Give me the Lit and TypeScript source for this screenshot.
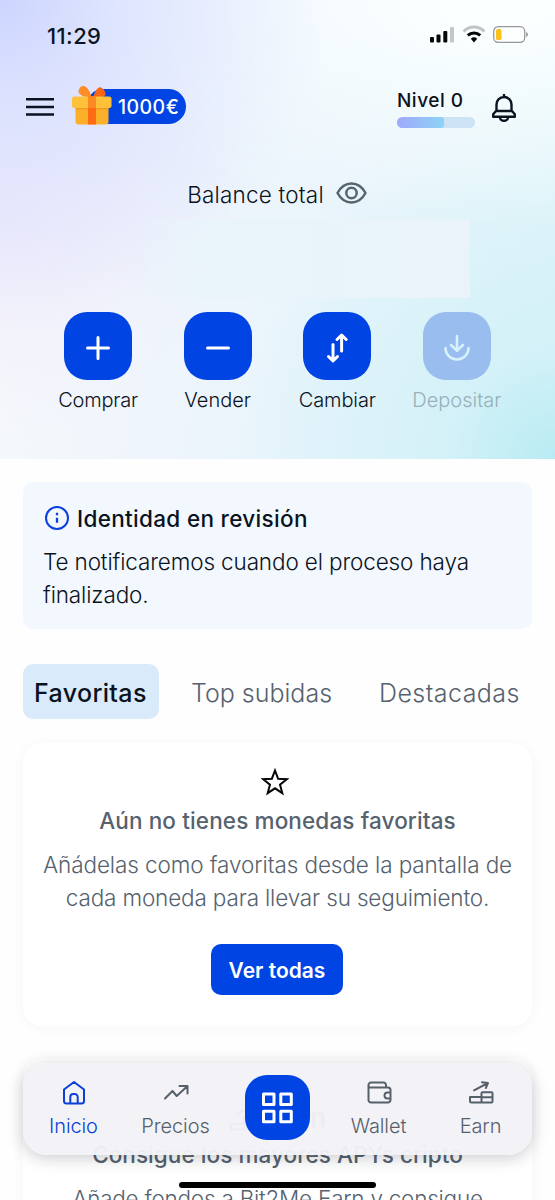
import { LitElement, html, css, svg } from "lit";
import { customElement } from "lit/decorators.js";

const actions = [
  { label: "Comprar", cls: "l-comprar", icon: svg`<path d="M34 25.500v21M23.500 36h21"/>`, off: false },
  { label: "Vender", cls: "l-vender", icon: svg`<path d="M23.500 36h21"/>`, off: false },
  { label: "Cambiar", cls: "l-cambiar", icon: svg`<path d="M30 32.500v15.500M25.500 44.500L30 49l4.500-4.500M38.600 39V23.500M34 27.500l4.600-4.500 4.600 4.500"/>`, off: false },
  { label: "Depositar", cls: "l-depositar", icon: svg`<path d="M34 24v14.500M28 33l6 5.700 6-5.700M22.500 36a11.500 11.500 0 0 0 23 0" stroke-width="2.600"/>`, off: true },
];

@customElement("app-root")
export class AppRoot extends LitElement {
  static styles = css`
    :host {
      display: block;
      position: relative;
      width: 555px;
      height: 1200px;
      overflow: hidden;
      background: #fefefe;
      color: #0b1220;
      font-family: Inter, "Noto Sans", sans-serif;
      font-weight: 300;
    }
    * { box-sizing: border-box; }
    svg { display: block; flex: none; fill: none; }
    p, h2, h3 { margin: 0; white-space: nowrap; }
    .hero {
      height: 459px;
      display: flex;
      flex-direction: column;
      background:
        radial-gradient(circle at 0 0, #ccd5ff 0, rgba(212, 220, 255, 0.7) 110px, rgba(235, 240, 255, 0) 330px),
        radial-gradient(ellipse 240px 230px at 0 210px, rgba(238, 232, 250, 0.75), rgba(240, 238, 251, 0)),
        radial-gradient(ellipse 460px 230px at 90% 0, #fbffff 10%, rgba(251, 255, 255, 0)),
        radial-gradient(circle at 100% 100%, #b9ebf3 0, rgba(204, 240, 247, 0.65) 110px, rgba(224, 244, 250, 0) 330px),
        linear-gradient(100deg, #f8fafb 0, #eff5fc 35%, #e7f4fb 65%, #dff4f9 100%);
    }
    .status { height: 70px; padding: 0 26px 0 47px; display: flex; align-items: center; }
    .time { flex: 1; padding-top: 1px; font-size: 22px; font-weight: 550; letter-spacing: 0.4px; }
    .signals { display: flex; align-items: center; }
    .top { height: 72px; padding: 0 37px 0 26px; display: flex; align-items: center; }
    .menu { margin-top: 1px; }
    .promo { display: flex; align-items: center; margin-left: 18px; width: 114px; height: 40px; position: relative; }
    .pill {
      margin: 1px 0 0 14px; width: 100px; height: 35px; border-radius: 18px; background: #0044e3;
      color: #fff; font-size: 19.500px; font-weight: 550; letter-spacing: 0.45px; line-height: 36px; padding-left: 32px; white-space: nowrap;
    }
    .gift { position: absolute; left: 0; top: -1px; }
    .level { margin-left: auto; width: 78px; padding-top: 5px; }
    .level-name { font-size: 19px; font-weight: 450; line-height: 24px; letter-spacing: 0.5px; white-space: nowrap; }
    .bar { height: 11px; border-radius: 6px; background: #cce3f6; margin-top: 4px; overflow: hidden; }
    .fill { height: 100%; width: 60%; border-radius: 0 3px 3px 0; background: linear-gradient(90deg, #a0a8fb, #8cd4f5); }
    .bell { margin-left: 16px; margin-right: 1px; margin-top: 3px; }
    .balance { margin-top: 38px; height: 28px; display: flex; align-items: center; justify-content: center; gap: 12px; padding-right: 1px; font-size: 22.500px; letter-spacing: 0.2px; }
    .eye { margin-top: -3px; }
    .amount { margin: 11px 0 0 130px; width: 340px; height: 79px; background: linear-gradient(90deg, rgba(232, 244, 250, 0), rgba(232, 244, 250, 0.8) 25%, #e9f4fa 60%, #eaf3fa); }
    .actions { display: flex; margin: 14px 0 0 38.300px; }
    .action { width: 119.600px; display: flex; flex-direction: column; align-items: center; }
    .tile { width: 68px; height: 68px; border-radius: 23px; background: #0044e3; }
    .tile svg { stroke: #fff; stroke-width: 3; stroke-linecap: round; stroke-linejoin: round; }
    .label { margin-top: 8px; font-size: 20px; line-height: 24px; white-space: nowrap; }
    .l-comprar { letter-spacing: -0.2px; }
    .l-cambiar { letter-spacing: -0.1px; }
    .off .tile { background: #98bdee; }
    .off .tile svg { stroke: #d7f1fb; }
    .off .label { color: #98b0b9; }
    .notice { margin: 23px 23px 0; height: 147px; border-radius: 10px; background: #f2f8fe; padding: 20px; }
    .notice-head { display: flex; align-items: center; gap: 7px; padding-left: 1px; height: 32px; }
    .notice-head h2 { font-size: 22.500px; font-weight: 550; letter-spacing: 0.32px; }
    .body { font-size: 22.500px; line-height: 33px; }
    .notice .body { margin-top: 11px; letter-spacing: -0.13px; }
    .tabs { margin: 35px 23px 0; height: 55px; display: flex; align-items: center; font-size: 25px; color: #56626e; }
    .tab { white-space: nowrap; line-height: 55px; padding-top: 2px; height: 55px; }
    .tab.on { width: 136px; padding-left: 11px; border-radius: 10px; background: #d9eafb; color: #0b1220; font-weight: 550; font-size: 25px; letter-spacing: 0.35px; margin-right: 32px; }
    .tab.mid { width: 188px; }
    .tab.last { letter-spacing: 0.45px; }
    .card { margin: 24px 23px 0; border-radius: 20px; background: #fff; box-shadow: 0 2px 14px rgba(30, 40, 60, 0.04); display: flex; flex-direction: column; align-items: center; color: #56626e; }
    .favs { height: 283px; }
    .star { margin-top: 25px; margin-right: 6px; }
    .card h3 { font-size: 22.500px; line-height: 30px; font-weight: 550; letter-spacing: 0.13px; }
    .favs h3 { margin-top: 10px; }
    .favs .body { margin-top: 12px; text-align: center; }
    .t-f1 { letter-spacing: -0.09px; }
    .t-f2 { letter-spacing: -0.15px; }
    .button { margin-top: 30px; margin-right: 1px; width: 132px; height: 51px; border-radius: 10px; background: #0044e3; color: #fff; font-size: 21px; font-weight: 600; line-height: 53px; text-align: center; white-space: nowrap; }
    .earn { margin-top: 32px; height: 230px; padding-top: 40px; }
    .earn-title { display: flex; gap: 10px; align-items: center; font-size: 26px; line-height: 40px; font-weight: 600; color: #56626e; }
    .earn h3 { margin-top: 2px; letter-spacing: 0.06px; }
    .earn .body { margin-top: 12px; letter-spacing: -0.24px; }
    .nav {
      position: absolute; left: 23px; top: 1063px; width: 509px; height: 92px; border-radius: 24px;
      background: rgba(243, 243, 247, 0.96); box-shadow: 0 3px 16px rgba(20, 25, 40, 0.22);
      display: flex; color: #56606b; font-size: 20px;
    }
    .item { flex: 1; display: flex; flex-direction: column; align-items: center; padding: 16px 1px 0 0; }
    .item svg { stroke: currentColor; stroke-width: 2; stroke-linecap: round; stroke-linejoin: round; }
    .item .name { margin-top: 7px; line-height: 24px; white-space: nowrap; letter-spacing: -0.1px; }
    .current { color: #0b3fd8; }
    .middle { padding-right: 0; }
    .grid { margin-top: -4px; width: 65px; height: 65px; border-radius: 22px; background: #0044e3; }
    .home { position: absolute; left: 179px; top: 1182px; width: 197px; height: 6px; border-radius: 3px; background: #000; }
  `;

  render() {
    return html`
      <header class="hero">
        <div class="status">
          <span class="time">11:29</span>
          <div class="signals">
            <svg width="100" height="20" viewBox="0 0 100 20">
              <g fill="#05070a">
                <rect x="1" y="12" width="4" height="5.500" rx="1"/><rect x="7.500" y="9.500" width="4" height="8" rx="1"/><rect x="14.300" y="6" width="4" height="11.500" rx="1"/>
                <rect x="21" y="2" width="4" height="15.500" rx="1" fill="#c3c7c9"/>
              </g>
              <path d="M34.600 6.500a14.500 14.500 0 0 1 20.800 0" stroke="#c0c4c6" stroke-width="3"/>
              <path d="M38.800 10.400a9 9 0 0 1 12.400 0" stroke="#05070a" stroke-width="3"/>
              <path d="M41.800 13.700a5 5 0 0 1 6.400 0L45 17.500z" fill="#05070a"/>
              <rect x="64.700" y="1.700" width="31" height="15.600" rx="4.500" stroke="#96999b" stroke-width="1.300" fill="#fdfefe"/>
              <rect x="67" y="4" width="5.500" height="11" rx="1.500" fill="#fcc21b"/>
              <path d="M97.300 7v5c2-1 2-4 0-5z" fill="#7b7f82"/>
            </svg>
          </div>
        </div>
        <div class="top">
          <svg class="menu" width="28" height="20" viewBox="0 0 28 20"><path d="M0 2.200h28M0 10h28M0 17.500h28" stroke="#0b1220" stroke-width="2.500"/></svg>
          <div class="promo">
            <div class="pill">1000€</div>
            <svg class="gift" width="40" height="40" viewBox="0 0 40 40">
              <path d="M17.500 12.500C12 12 6 9.500 6.500 6 7 2.500 9.500.500 12 1c3.500 1 6 6 7.500 11z" fill="#ff8c24"/>
              <path d="M21 12.500C22.500 8 24.500 3.500 27.500 2.300c2-.700 6.500 3.400 6 7.200-.3 2.500-6 3.500-12.500 3z" fill="#fa6513"/>
              <rect x="3.500" y="18" width="33" height="21.500" rx="3" fill="#fbb02a"/>
              <rect x="3.500" y="21" width="33" height="3.500" fill="#f29a1f"/>
              <rect x="0" y="11.500" width="39.500" height="11.500" rx="2.500" fill="#ffc13a"/>
              <path d="M16 11.500h8v28h-8z" fill="#ff6a12"/><path d="M16 11.500h8v11.500h-8z" fill="#fc8a24"/>
            </svg>
          </div>
          <div class="level">
            <div class="level-name">Nivel 0</div>
            <div class="bar"><div class="fill"></div></div>
          </div>
          <svg class="bell" width="26" height="30" viewBox="0 0 26 30" stroke="#0b1220" stroke-width="2.400" stroke-linejoin="round">
            <path d="M13 1v3M5.500 18v-6.500a7.500 7.500 0 0 1 15 0V18M5 18h16l2.800 3.300v2.400H2.200v-2.400z"/>
            <path d="M9 24.500a4 3.300 0 0 0 8 0"/>
          </svg>
        </div>
        <div class="balance">
          <span>Balance total</span>
          <svg class="eye" width="31" height="22" viewBox="0 0 31 22" stroke="#56666f" stroke-width="2.500">
            <path d="M1.500 11C5 4.500 10 1.500 15.500 1.500S26 4.500 29.500 11C26 17.500 21 20.500 15.500 20.500S5 17.500 1.500 11z" stroke-linejoin="round"/><circle cx="15.500" cy="11" r="5.200"/>
          </svg>
        </div>
        <div class="amount"></div>
        <div class="actions">
          ${actions.map((a) => html`
            <div class="action ${a.off ? "off" : ""}">
              <div class="tile"><svg width="68" height="68" viewBox="0 0 68 68">${a.icon}</svg></div>
              <span class="label ${a.cls}">${a.label}</span>
            </div>`)}
        </div>
      </header>
      <section class="notice">
        <div class="notice-head">
          <svg width="26" height="26" viewBox="0 0 26 26" stroke="#0b3fe0" stroke-width="2"><circle cx="13" cy="13" r="11"/><path d="M13 12.800v5M13 7.800v2.400" stroke-width="2.300"/></svg>
          <h2>Identidad en revisión</h2>
        </div>
        <p class="body">Te notificaremos cuando el proceso haya<br />finalizado.</p>
      </section>
      <nav class="tabs">
        <span class="tab on">Favoritas</span>
        <span class="tab mid">Top subidas</span>
        <span class="tab last">Destacadas</span>
      </nav>
      <section class="card favs">
        <svg class="star" width="28" height="28" viewBox="0 0 28 28"><path d="M14 2.500l3.100 8.200 8.700.5-6.800 5.400 2.300 8.500L14 20.300l-7.300 4.800L9 16.600 2.200 11.200l8.700-.5z" stroke="#05070a" stroke-width="2"/></svg>
        <h3>Aún no tienes monedas favoritas</h3>
        <p class="body"><span class="t-f1">Añádelas como favoritas desde la pantalla de</span><br /><span class="t-f2">cada moneda para llevar su seguimiento.</span></p>
        <div class="button">Ver todas</div>
      </section>
      <section class="card earn">
        <div class="earn-title">
          <svg width="30" height="28" viewBox="0 0 24 24" stroke="currentColor" stroke-width="2"><path d="M1 17h11v5H1zM12 12h11v10H12zM12 17h11M5 9l12-6M13 2l5 1-2 4.500"/></svg>
          <span>Earn</span>
        </div>
        <h3>Consigue los mayores APYs cripto</h3>
        <p class="body">Añade fondos a Bit2Me Earn y consigue</p>
      </section>
      <nav class="nav">
        <div class="item current">
          <svg width="28" height="28" viewBox="0 0 28 28"><path d="M4 10.500L14 3l10 7.500v11.500a2.500 2.500 0 0 1-2.500 2.500h-15A2.500 2.500 0 0 1 4 22zM10.300 24.500V18a3 3 0 0 1 3-3h1.400a3 3 0 0 1 3 3v6.500"/></svg>
          <span class="name">Inicio</span>
        </div>
        <div class="item">
          <svg width="28" height="28" viewBox="0 0 28 28"><path d="M3 19.500l7.500-7.500 4.200 5L25 7.500M17.500 7H25.500v7.500"/></svg>
          <span class="name">Precios</span>
        </div>
        <div class="item middle">
          <div class="grid"><svg width="65" height="65" viewBox="0 0 65 65"><g stroke="#fff" stroke-width="3" fill="none"><path d="M18.500 19h10.500v10.500H18.500zM35.800 19h10.500v10.500H35.800zM18.500 36.200h10.500v10.500H18.500zM35.800 36.200h10.500v10.500H35.800z"/></g></svg></div>
        </div>
        <div class="item">
          <svg width="28" height="28" viewBox="0 0 28 28"><path d="M3.500 6v15a2.500 2.500 0 0 0 2.500 2.500h17a2.500 2.500 0 0 0 2.500-2.500V11A2.500 2.500 0 0 0 23 8.500H5.500a2 2 0 0 1-2-2.200A2.500 2.500 0 0 1 6 3.500h12.500a2.500 2.500 0 0 1 2.500 2.500v2M25.500 13.500h-3a3 3 0 0 0 0 6h3"/></svg>
          <span class="name">Wallet</span>
        </div>
        <div class="item">
          <svg width="28" height="28" viewBox="0 0 28 28"><path d="M3 18H14.500V23.500H4.500a1.500 1.500 0 0 1-1.500-1.500zM14.500 14.300a1 1 0 0 1 1-1h9a1 1 0 0 1 1 1v8.200a1 1 0 0 1-1 1H14.500zM14.500 18.300h11M7 11.300l13-6.800M15 3.300l6 .7-2.200 5"/></svg>
          <span class="name">Earn</span>
        </div>
      </nav>
      <div class="home"></div>
    `;
  }
}
